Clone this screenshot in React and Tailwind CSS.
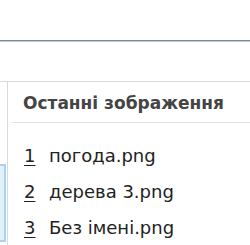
export default function App() {
  const recent = [
    { n: "1", name: "погода.png" },
    { n: "2", name: "дерева 3.png" },
    { n: "3", name: "Без імені.png" },
  ];

  return (
    <div className="w-[250px] h-[245px] bg-white overflow-hidden flex flex-col font-['DejaVu_Sans',sans-serif]">
      <div className="h-[40px] shrink-0" />
      <div className="h-px bg-[#7d8898] shrink-0" />
      <div className="h-px bg-[#c4cbd4] shrink-0" />
      <div className="h-[40px] shrink-0 border-b border-[#d7dadf]" />

      <div className="flex flex-1 min-h-0">
        <div className="w-[7px] shrink-0 flex flex-col">
          <div className="h-[82px] shrink-0" />
          <div className="h-[78px] w-[6px] bg-[#e3f0fa] border-y-2 border-r-2 border-[#a9d1f0]" />
        </div>

        <div className="flex-1 border-l border-[#d7dadf] pl-[4px]">
          <div className="h-[41px] border-b border-[#e2e2e2] flex items-center pl-[11px] pt-[2px]">
            <span className="text-[17px] font-bold text-[#444] leading-none">
              Останні зображення
            </span>
          </div>
          <ul className="pt-[15px]">
            {recent.map((r) => (
              <li
                key={r.n}
                className="h-[36px] flex items-center pl-[12px] text-[18px] text-[#222] leading-none"
              >
                <span className="underline underline-offset-[3px] w-[25px]">{r.n}</span>
                <span>{r.name}</span>
              </li>
            ))}
          </ul>
        </div>
      </div>
    </div>
  );
}
